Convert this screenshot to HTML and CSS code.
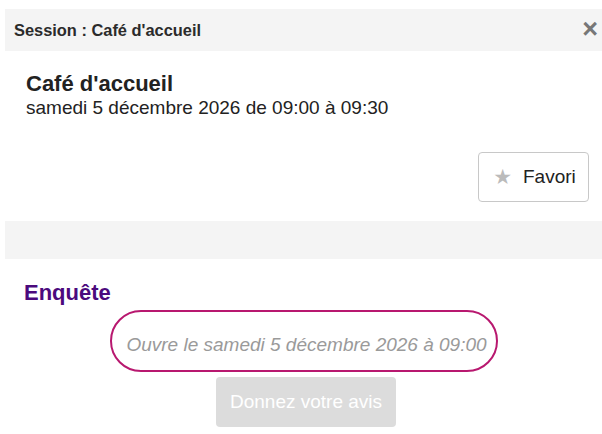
FILE: index.html
```html
<!DOCTYPE html>
<html lang="fr">
<head>
<meta charset="utf-8">
<link rel="stylesheet" href="styles.css">
</head>
<body>
<div class="modal">
  <div class="modal-header">
    <span class="modal-title">Session : Café d'accueil</span>
    <span class="close">×</span>
  </div>
  <div class="session">
    <div class="session-name">Café d'accueil</div>
    <div class="session-date">samedi 5 décembre 2026 de 09:00 à 09:30</div>
  </div>
  <div class="actions">
    <button class="fav-btn"><span class="star">★</span><span>Favori</span></button>
  </div>
  <div class="spacer-bar"></div>
  <div class="survey">
    <h2 class="survey-title">Enquête</h2>
    <div class="survey-body">
      <div class="pill">Ouvre le samedi 5 décembre 2026 à 09:00</div>
      <button class="avis-btn" disabled>Donnez votre avis</button>
    </div>
  </div>
</div>
</body>
</html>
```
FILE: styles.css
```css
html, body {
  margin: 0;
  padding: 0;
  background: #fff;
  font-family: "Liberation Sans", Arial, sans-serif;
  color: #222;
  overflow: hidden;
}
.modal {
  padding: 9px 0 0 5px;
  width: 597px;
}
.modal-header {
  height: 42px;
  background: #f4f4f4;
  display: flex;
  align-items: center;
  justify-content: space-between;
  padding: 0 4px 0 9px;
}
.modal-title {
  font-size: 16.4px;
  font-weight: bold;
  color: #2b2b2b;
}
.close {
  font-size: 27px;
  font-weight: bold;
  color: #777;
  line-height: 1;
  margin-top: -1px;
}
.session {
  padding: 20px 0 0 21px;
}
.session-name {
  font-size: 22px;
  font-weight: bold;
  line-height: 26px;
  color: #222;
}
.session-date {
  font-size: 19px;
  line-height: 22px;
  color: #222;
}
.actions {
  display: flex;
  justify-content: flex-end;
  padding: 33px 13px 0 0;
}
.fav-btn {
  width: 111px;
  height: 50px;
  border: 1px solid #c8c8c8;
  border-radius: 4px;
  background: #fff;
  display: flex;
  align-items: center;
  justify-content: center;
  gap: 11px;
  font-family: "Liberation Sans", Arial, sans-serif;
  font-size: 19px;
  color: #222;
  padding: 0 0 0 2px;
}
.star {
  color: #bbb;
  font-family: "DejaVu Sans", sans-serif;
  font-size: 21px;
  line-height: 1;
}
.spacer-bar {
  height: 38px;
  background: #f4f4f4;
  margin-top: 19px;
}
.survey-title {
  margin: 0;
  padding: 20px 0 0 19px;
  font-size: 22px;
  line-height: 28px;
  font-weight: bold;
  color: #4b0a7d;
}
.survey-body {
  display: flex;
  flex-direction: column;
  align-items: center;
}
.pill {
  margin-top: 3px;
  width: 388px;
  height: 62px;
  box-sizing: border-box;
  border: 2px solid #b8186f;
  border-radius: 31px;
  display: flex;
  align-items: flex-end;
  justify-content: center;
  padding: 0 0 14px 6px;
  font-size: 19px;
  font-style: italic;
  color: #9a9a9a;
  line-height: 22px;
}
.avis-btn {
  margin: 5px 0 0 5px;
  width: 180px;
  height: 50px;
  border: none;
  border-radius: 4px;
  background: #dcdcdc;
  color: #fff;
  font-family: "Liberation Sans", Arial, sans-serif;
  font-size: 19px;
}
```
